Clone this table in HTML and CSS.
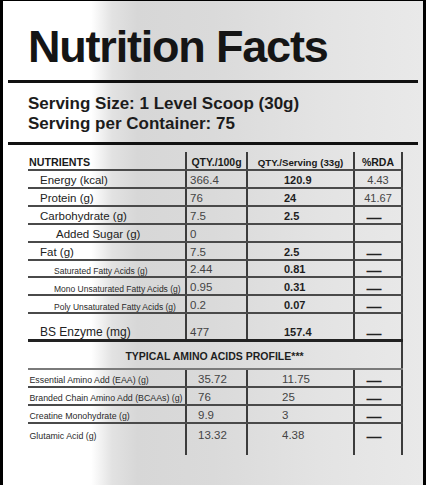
FILE: index.html
```html
<!DOCTYPE html>
<html lang="en">
<head>
    <meta charset="UTF-8">
    <meta name="viewport" content="width=device-width, initial-scale=1.0">
    <title>Nutrition Facts</title>
    <link rel="stylesheet" href="styles.css">
</head>
<body>

    <div class="label">
        <h1 class="title">Nutrition Facts</h1>
        <div class="rule"></div>

        <div class="serving">
            <p>Serving Size: 1 Level Scoop (30g)</p>
            <p>Serving per Container: 75</p>
        </div>
        <div class="rule"></div>

        <div class="facts">
            <div class="row head">
                <div class="cell name">NUTRIENTS</div>
                <div class="cell mid">QTY./100g</div>
                <div class="cell mid tight">QTY./Serving (33g)</div>
                <div class="cell mid last">%RDA</div>
            </div>
            <div class="row">
                <div class="cell name">Energy (kcal)</div>
                <div class="cell qty">366.4</div>
                <div class="cell serve">120.9</div>
                <div class="cell rda last">4.43</div>
            </div>
            <div class="row">
                <div class="cell name">Protein (g)</div>
                <div class="cell qty">76</div>
                <div class="cell serve">24</div>
                <div class="cell rda last">41.67</div>
            </div>
            <div class="row">
                <div class="cell name">Carbohydrate (g)</div>
                <div class="cell qty">7.5</div>
                <div class="cell serve">2.5</div>
                <div class="cell rda dash last"><span>—</span></div>
            </div>
            <div class="row">
                <div class="cell name indent">Added Sugar (g)</div>
                <div class="cell qty">0</div>
                <div class="cell serve"></div>
                <div class="cell rda last"></div>
            </div>
            <div class="row">
                <div class="cell name">Fat (g)</div>
                <div class="cell qty">7.5</div>
                <div class="cell serve">2.5</div>
                <div class="cell rda dash last"><span>—</span></div>
            </div>
            <div class="row short">
                <div class="cell name sub">Saturated Fatty Acids (g)</div>
                <div class="cell qty">2.44</div>
                <div class="cell serve">0.81</div>
                <div class="cell rda dash last"><span>—</span></div>
            </div>
            <div class="row">
                <div class="cell name sub">Mono Unsaturated Fatty Acids (g)</div>
                <div class="cell qty">0.95</div>
                <div class="cell serve">0.31</div>
                <div class="cell rda dash last"><span>—</span></div>
            </div>
            <div class="row">
                <div class="cell name sub">Poly Unsaturated Fatty Acids (g)</div>
                <div class="cell qty">0.2</div>
                <div class="cell serve">0.07</div>
                <div class="cell rda dash last"><span>—</span></div>
            </div>
            <div class="row big">
                <div class="cell name large">BS Enzyme (mg)</div>
                <div class="cell qty">477</div>
                <div class="cell serve">157.4</div>
                <div class="cell rda dash last"><span>—</span></div>
            </div>

            <div class="row profile">
                <div class="cell last">TYPICAL AMINO ACIDS PROFILE***</div>
            </div>
            <div class="row amino">
                <div class="cell name">Essential Amino Add (EAA) (g)</div>
                <div class="cell qty">35.72</div>
                <div class="cell serve">11.75</div>
                <div class="cell rda dash last"><span>—</span></div>
            </div>
            <div class="row amino">
                <div class="cell name">Branded Chain Amino Add (BCAAs) (g)</div>
                <div class="cell qty">76</div>
                <div class="cell serve">25</div>
                <div class="cell rda dash last"><span>—</span></div>
            </div>
            <div class="row amino">
                <div class="cell name">Creatine Monohydrate (g)</div>
                <div class="cell qty">9.9</div>
                <div class="cell serve">3</div>
                <div class="cell rda dash last"><span>—</span></div>
            </div>
            <div class="row amino end">
                <div class="cell name">Glutamic Acid (g)</div>
                <div class="cell qty">13.32</div>
                <div class="cell serve">4.38</div>
                <div class="cell rda dash last"><span>—</span></div>
            </div>
        </div>
    </div>

</body>
</html>
```

FILE: styles.css
```css
/* General */
body {
    margin: 0;
    font-family: 'Liberation Sans', Arial, sans-serif;
    color: #1c1c1c;
}

/* Label panel */
.label {
    box-sizing: border-box;
    width: 426px;
    height: 485px;
    padding: 0 5px;
    border-top: 1px solid #000;
    border-left: 3px solid #000;
    border-right: 3px solid #000;
    background: linear-gradient(90deg, #fff 0%, #fff 21%, #e2e2e2 26%, #d7d7d7 32%, #dadada 50%, #e3e3e3 75%, #e9e9e9 100%);
}

.title {
    margin: 0;
    padding: 21px 0 0 20px;
    font-size: 45px;
    line-height: 50px;
    font-weight: bold;
    letter-spacing: -1.2px;
    color: #151515;
}

.rule {
    height: 3px;
    margin-top: 8px;
    background: #111;
}

/* Serving info */
.serving {
    margin-top: 11px;
    padding-left: 20px;
}

.serving p {
    margin: 0;
    font-size: 17px;
    line-height: 20px;
    font-weight: bold;
    color: #1c1c1c;
}

/* Facts table */
.facts {
    margin: 7px 0 0 20px;
    width: 375px;
}

.row {
    display: grid;
    grid-template-columns: 157px 61px 107px 50px;
    box-sizing: border-box;
    height: 18px;
    border-bottom: 2px solid #4a4a4a;
}

.cell {
    display: flex;
    align-items: flex-end;
    padding-bottom: 1px;
    line-height: 1;
    white-space: nowrap;
    font-size: 11.5px;
}

.cell + .cell {
    border-left: 2px solid #3c3c3c;
}

.cell.last {
    border-right: 2px solid #3c3c3c;
}

.row.head {
    height: 19px;
}

.head .cell {
    padding-bottom: 1.5px;
    font-size: 10.5px;
    font-weight: bold;
    color: #1a1a1a;
}

.head .name {
    padding-left: 1px;
    font-size: 10.7px;
}

.head .mid {
    justify-content: center;
}

.head .tight {
    font-size: 9.7px;
}

.name {
    padding-left: 12px;
    color: #222;
}

.name.indent {
    padding-left: 28px;
}

.name.sub {
    padding-left: 26px;
    font-size: 8.5px;
    color: #2a2a2a;
}

.name.large {
    font-size: 12px;
}

.qty {
    padding-left: 3px;
    color: #444;
}

.serve {
    padding-left: 36px;
    font-size: 11px;
    font-weight: bold;
    color: #1e1e1e;
}

.rda {
    justify-content: center;
    font-size: 11px;
    color: #444;
}

.rda.dash {
    padding-right: 8px;
}

.rda.dash span {
    margin-bottom: -3px;
    font-size: 15px;
    font-weight: bold;
    color: #222;
}

.row.short {
    height: 17px;
}

.row.big {
    height: 28px;
    border-bottom: 3px solid #222;
}

/* Amino acids section */
.row.profile {
    height: 28px;
    border-bottom: 2px solid #7a7a7a;
}

.profile .cell {
    grid-column: 1 / -1;
    justify-content: center;
    padding-bottom: 7px;
    font-size: 10.5px;
    font-weight: bold;
    color: #1e1e1e;
}

.amino .name {
    padding-left: 1.5px;
    font-size: 8.8px;
    color: #2a2a2a;
}

.amino .qty {
    padding-left: 11px;
}

.amino .serve {
    padding-left: 34px;
    font-size: 11.5px;
    font-weight: normal;
    color: #444;
}

.row.end {
    height: 31px;
    border-bottom: none;
}

.end .cell {
    padding-bottom: 14px;
}
```
